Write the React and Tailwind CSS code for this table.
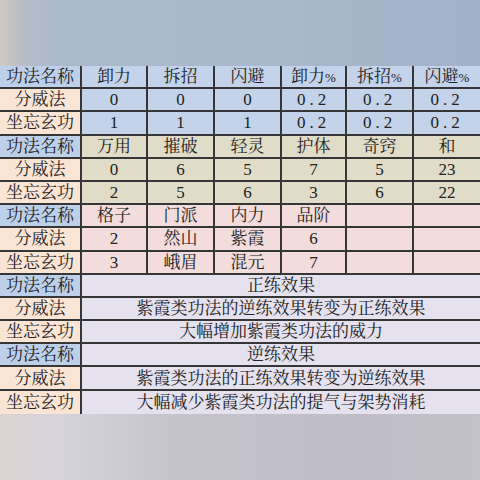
const COLS = 'grid-cols-[82px_66px_67px_67px_65px_67px_66px]'

const HEAD = 'bg-[#bdd0e9]'
const PEACH = 'bg-[#fae4d4]'

const blocks = [
  {
    bg: 'bg-[#c2d3ea]',
    rows: [
      ['功法名称', HEAD, ['卸力', '拆招', '闪避', '卸力%', '拆招%', '闪避%']],
      ['分威法', PEACH, ['0', '0', '0', '0.2', '0.2', '0.2']],
      ['坐忘玄功', PEACH, ['1', '1', '1', '0.2', '0.2', '0.2']],
    ],
  },
  {
    bg: 'bg-[#e0dcc8]',
    rows: [
      ['功法名称', HEAD, ['万用', '摧破', '轻灵', '护体', '奇窍', '和']],
      ['分威法', PEACH, ['0', '6', '5', '7', '5', '23']],
      ['坐忘玄功', PEACH, ['2', '5', '6', '3', '6', '22']],
    ],
  },
  {
    bg: 'bg-[#f2dcdc]',
    rows: [
      ['功法名称', HEAD, ['格子', '门派', '内力', '品阶', '', '']],
      ['分威法', PEACH, ['2', '然山', '紫霞', '6', '', '']],
      ['坐忘玄功', PEACH, ['3', '峨眉', '混元', '7', '', '']],
    ],
  },
]

const merged = [
  ['功法名称', HEAD, '正练效果'],
  ['分威法', PEACH, '紫霞类功法的逆练效果转变为正练效果'],
  ['坐忘玄功', PEACH, '大幅增加紫霞类功法的威力'],
  ['功法名称', HEAD, '逆练效果'],
  ['分威法', PEACH, '紫霞类功法的正练效果转变为逆练效果'],
  ['坐忘玄功', PEACH, '大幅减少紫霞类功法的提气与架势消耗'],
]

function Cell({ children, className = '', last = false, bottom = true }) {
  return (
    <div
      className={`h-[23.2px] flex items-center justify-center border-[#363636] ${bottom ? 'border-b-2' : ''} ${last ? '' : 'border-r-2'} ${className}`}
    >
      <span className="leading-none">{children}</span>
    </div>
  )
}

function Pct({ text }) {
  if (text.endsWith('%')) {
    return <>{text.slice(0, -1)}<span className="text-[13px]">%</span></>
  }
  if (text === '0.2') return <span className="tracking-[4px]">0.2</span>
  return text
}

export default function App() {
  return (
    <div className="w-[480px] h-[480px] overflow-hidden flex flex-col font-['Liberation_Serif','Noto_Serif_CJK_SC','Noto_Sans_CJK_SC',serif] text-[17px] text-[#222]">
      {/* blurred top */}
      <div className="h-[66px] shrink-0 bg-[linear-gradient(90deg,#d2c9c0_0%,#b7bcc6_5%,#abb9cc_12%,#a9b8cc_55%,#a3b1c8_100%)]" />

      {/* table */}
      <div className={`grid ${COLS}`}>
        {blocks.map((b) =>
          b.rows.map(([label, lbg, vals], ri) => (
            <div key={label + ri + b.bg} className="contents">
              <Cell className={lbg}>{label}</Cell>
              {vals.map((v, i) => (
                <Cell key={i} className={b.bg} last={i === 5}>
                  <Pct text={v} />
                </Cell>
              ))}
            </div>
          ))
        )}
        {merged.map(([label, lbg, text], i) => (
          <div key={i} className="contents">
            <Cell className={lbg} bottom={i < 5}>{label}</Cell>
            <div
              className={`col-span-6 h-[23.2px] flex items-center justify-center bg-[#e5e1ee] border-[#363636] ${i < 5 ? 'border-b-2' : ''}`}
            >
              <span className="leading-none">{text}</span>
            </div>
          </div>
        ))}
      </div>

      {/* blurred bottom */}
      <div className="flex-1 bg-[linear-gradient(90deg,#dcd3d0_0%,#d6d3dc_12%,#c5c4cd_35%,#bfbec8_70%,#c2c1ca_100%)]" />
    </div>
  )
}
